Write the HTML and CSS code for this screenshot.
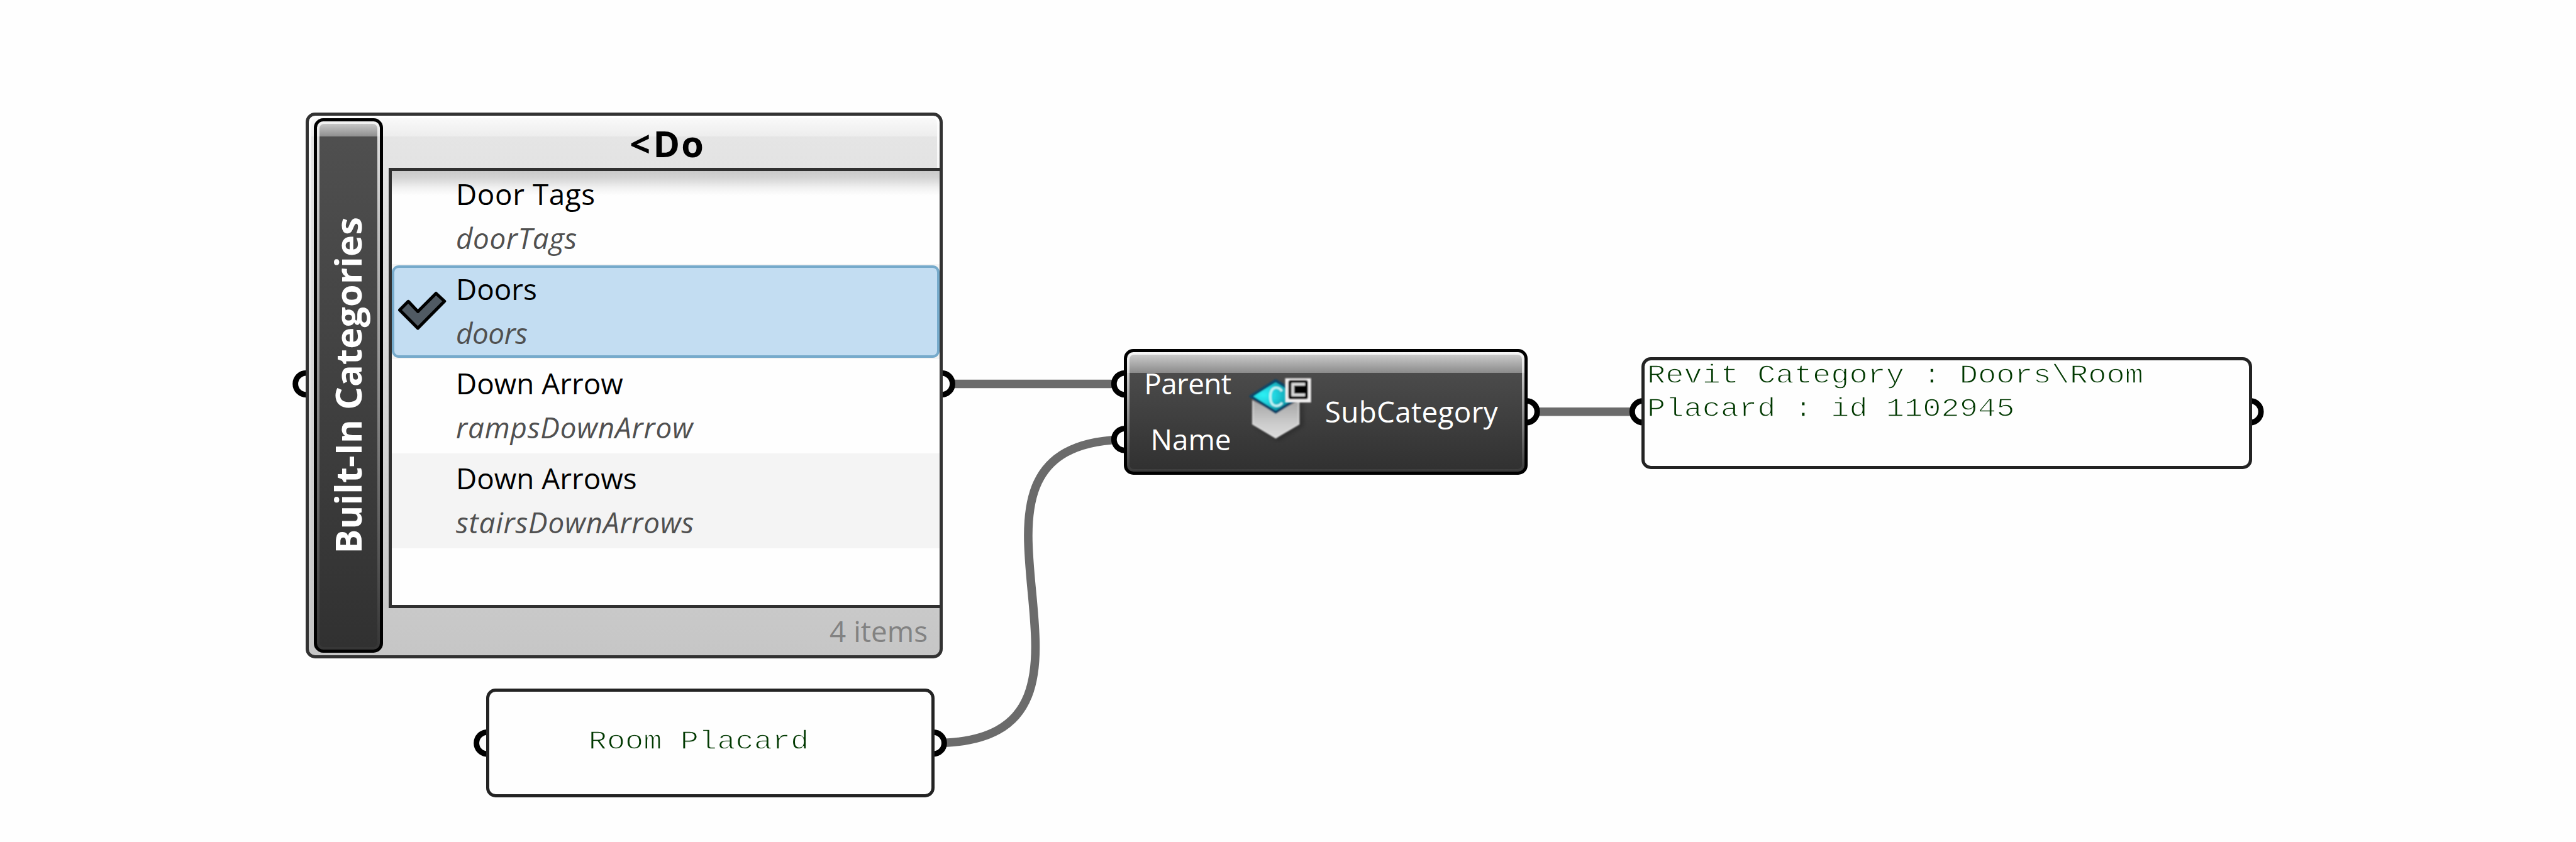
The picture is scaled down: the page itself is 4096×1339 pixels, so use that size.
FILE: index.html
```html
<!DOCTYPE html>
<html lang="en">
<head>
<meta charset="utf-8">
<title>SubCategory graph</title>
<link rel="stylesheet" href="styles.css">
</head>
<body>
<main class="canvas">
  <svg class="wires" viewBox="0 0 5551 1815" preserveAspectRatio="none" aria-hidden="true">
    <g class="wire">
      <path d="M2029 827.5H2424"/>
      <path d="M2014 1601.7C2496 1601.7 1951 947.3 2433 947.3"/>
      <path d="M3289 887.5H3541"/>
    </g>
    <g class="port">
      <circle cx="660" cy="827.5" r="23.5"/>
      <circle cx="2029" cy="827.5" r="23.5"/>
      <circle cx="1050.2" cy="1601.7" r="23.5"/>
      <circle cx="2011.2" cy="1601.7" r="23.5"/>
      <circle cx="2424" cy="827.5" r="23.5"/>
      <circle cx="2424" cy="947.3" r="23.5"/>
      <circle cx="3289" cy="887.5" r="23.5"/>
      <circle cx="3540.7" cy="887.5" r="23.5"/>
      <circle cx="4848.7" cy="887.5" r="23.5"/>
    </g>
  </svg>

  <section class="node picker">
    <div class="picker-bar"><span class="picker-name">Built-In Categories</span></div>
    <div class="picker-main">
      <header class="picker-filter"><span class="lt">&lt;</span>Do</header>
      <ul class="picker-list">
        <li class="item"><span class="title wide">Door Tags</span><em class="value">doorTags</em></li>
        <li class="item alt selected">
          <svg class="check" viewBox="0 0 76 60" aria-hidden="true"><path d="M3.5 30 17.2 16.3 32.4 32.4 61.3 3.5 74.8 16 32.4 58.9Z"/></svg>
          <span class="title">Doors</span><em class="value tight">doors</em>
        </li>
        <li class="item"><span class="title">Down Arrow</span><em class="value loose">rampsDownArrow</em></li>
        <li class="item alt"><span class="title">Down Arrows</span><em class="value loose">stairsDownArrows</em></li>
      </ul>
      <footer class="picker-count">4 items</footer>
    </div>
  </section>

  <section class="node panel panel-name"><p class="mono">Room Placard</p></section>

  <section class="node component">
    <div class="inputs"><span class="parent">Parent</span><span>Name</span></div>
    <svg class="icon" viewBox="80 100 420 420" aria-hidden="true">
      <defs>
        <linearGradient id="body" x1="0" y1="0" x2="0" y2="1">
          <stop offset="0" stop-color="#a4a4a4"/><stop offset=".6" stop-color="#cbcbcb"/><stop offset="1" stop-color="#dcdcdc"/>
        </linearGradient>
        <radialGradient id="top" cx=".25" cy=".45" r=".6">
          <stop offset="0" stop-color="#2df0f4"/><stop offset=".45" stop-color="#1fd0dc"/><stop offset="1" stop-color="#0b8f9f"/>
        </radialGradient>
        <filter id="soft" x="-20%" y="-20%" width="140%" height="140%"><feGaussianBlur stdDeviation="4"/></filter>
        <filter id="shade" x="-30%" y="-30%" width="160%" height="160%"><feGaussianBlur stdDeviation="14"/></filter>
      </defs>
      <path d="M135 270V425L280 512 445 415V260Z" fill="#000" opacity=".22" filter="url(#shade)"/>
      <g filter="url(#soft)">
        <path d="M112 245V405L265 496 419 405V245L265 330Z" fill="url(#body)"/>
        <path d="M119 255V401L265 487 412 401V255" fill="none" stroke="#dedede" stroke-width="9" opacity=".6"/>
        <path d="M104 223 265 121 426 223 265 326Z" fill="url(#top)" stroke="#0c4468" stroke-width="18" stroke-linejoin="round"/>
        <path d="M304 190C294 168 268 162 251 172 223 188 223 264 251 280 269 290 294 284 306 264" fill="none" stroke="#c4f3f5" stroke-width="15"/>
      </g>
      <g filter="url(#soft)">
        <path d="M326 106H493V263H326Z" fill="#f1efef"/>
        <rect x="347" y="118" width="126" height="123" rx="12" fill="#000"/>
        <path d="M455 145H375V214H455" fill="none" stroke="#dadada" stroke-width="18"/>
      </g>
    </svg>
    <span class="output">SubCategory</span>
  </section>

  <section class="node panel panel-result"><p class="mono">Revit Category : Doors\Room Placard : id 1102945</p></section>
</main>
</body>
</html>
```
FILE: styles.css
```css
* { box-sizing: border-box; }

body {
  margin: 0;
  background: #fefefe;
  font-family: "Open Sans", "Noto Sans", sans-serif;
  font-size: 45.8px;
}

.canvas {
  position: relative;
  width: 4096px;
  height: 1339px;
  overflow: hidden;
}

.wires {
  position: absolute;
  inset: 0;
  width: 100%;
  height: 100%;
}
.wire { fill: none; stroke: #6b6b6b; stroke-width: 18.4; }
.port { fill: #fefefe; stroke: #000; stroke-width: 12; }

.node { position: absolute; border-radius: 15px; }

/* Category picker */
.picker {
  left: 486px;
  top: 179px;
  width: 1013px;
  height: 868px;
  display: flex;
  border: 5px solid #323232;
  background: linear-gradient(#fff, #f4f4f4 12%, #c6c6c6);
}
.picker::before {
  content: "";
  position: absolute;
  inset: 4px 4px 0;
  border-radius: 8px 8px 10px 10px;
  background:
    linear-gradient(#f9f9f9, #ededed) 0 0 / 100% 29px no-repeat,
    linear-gradient(#e6e6e6, #c6c6c6);
}

.picker-bar {
  position: relative;
  flex: none;
  width: 110px;
  margin: 4px 9px 4px 8px;
  display: flex;
  align-items: center;
  justify-content: center;
  border: 5px solid #000;
  border-radius: 15px;
  background:
    linear-gradient(rgba(255,255,255,.55), rgba(255,255,255,.3)) 0 0 / 100% 24px no-repeat,
    linear-gradient(#e2e2e2, #363636);
}
.picker-bar::before {
  content: "";
  position: absolute;
  inset: 4px;
  border-radius: 7px;
  background:
    linear-gradient(#c6c6c6, #8f8f8f) 0 0 / 100% 20px no-repeat,
    linear-gradient(#505050, #313131);
}
.picker-name {
  position: relative;
  margin-right: 3px;
  writing-mode: vertical-rl;
  transform: rotate(180deg);
  color: #fff;
  font-size: 57.6px;
  font-weight: 700;
  line-height: 78px;
  letter-spacing: .17px;
  white-space: nowrap;
}

.picker-main {
  position: relative;
  flex: 1;
  display: flex;
  flex-direction: column;
}
.picker-filter {
  height: 83px;
  padding: 4px 0 0 10px;
  font-size: 57.6px;
  font-weight: 700;
  line-height: 80px;
  letter-spacing: 2px;
  text-align: center;
}
.lt { letter-spacing: 4.5px; }

.picker-list {
  flex: none;
  height: 700px;
  margin: 0;
  padding: 0;
  list-style: none;
  overflow: hidden;
  border: 5px solid #303030;
  border-right: 0;
  background:
    linear-gradient(#cacaca, #d4d4d4 28%, #f1f1f1 68%, #fefefe) 0 0 / 100% 39px no-repeat,
    #fefefe;
}
.item {
  position: relative;
  display: flex;
  flex-direction: column;
  height: 150.55px;
  padding: 3.4px 0 0 102px;
  line-height: 70.3px;
  white-space: nowrap;
}
.item:first-child { margin-top: -2.3px; }
.item.alt { background: #f4f4f4; }
.item.selected::before {
  content: "";
  position: absolute;
  inset: 2px 0;
  border: 4px solid #76aacb;
  border-radius: 11px;
  background: #c3ddf2;
}
.title, .value { position: relative; }
.title { color: #000; }
.title.wide { letter-spacing: .6px; }
.value { color: #505050; letter-spacing: .57px; }
.value.tight { letter-spacing: -.45px; }
.value.loose { letter-spacing: .83px; }
.check {
  position: absolute;
  left: 9px;
  top: 43px;
  width: 76px;
  height: 60px;
  overflow: visible;
  fill: #505a63;
  stroke: #000;
  stroke-width: 5;
  stroke-linejoin: round;
}

.picker-count {
  padding-right: 19px;
  line-height: 72px;
  color: #828282;
  text-align: right;
}

/* Text panels */
.panel {
  display: flex;
  border: 5px solid #232323;
  background: #fefefe;
}
.mono {
  margin: 0;
  font: 48.7px/62.1px "Liberation Mono", monospace;
  color: #003800;
  -webkit-text-stroke: 1.5px #fefefe;
  transform: scaleY(.86);
  transform-origin: 0 0;
}
.panel-name {
  left: 773px;
  top: 1095px;
  width: 713px;
  height: 173px;
  align-items: center;
  justify-content: center;
  padding: 0 37px 0 0;
}
.panel-name .mono { transform-origin: 0 50%; margin-top: -3px; }
.panel-result {
  left: 2610px;
  top: 568px;
  width: 971px;
  height: 178px;
  padding: 0 0 0 4px;
}
.panel-result .mono { margin-top: -2px; }

/* SubCategory component */
.component {
  left: 1787px;
  top: 555px;
  width: 642px;
  height: 200px;
  display: flex;
  align-items: center;
  border: 5px solid #000;
  background:
    linear-gradient(rgba(255,255,255,.6), rgba(255,255,255,.3)) 0 0 / 100% 33px no-repeat,
    linear-gradient(#e6e6e6, #3a3a3a);
  color: #fff;
}
.component::before {
  content: "";
  position: absolute;
  inset: 4px;
  border-radius: 7px;
  background:
    linear-gradient(#cacaca, #8b8b8b) 0 0 / 100% 29px no-repeat,
    linear-gradient(#505050, #313131);
}
.inputs {
  position: relative;
  display: flex;
  flex-direction: column;
  width: 165.5px;
  margin-top: -2.5px;
  line-height: 88.6px;
  text-align: right;
}
.parent { letter-spacing: -.6px; }
.icon {
  position: relative;
  flex: none;
  width: 103.3px;
  height: 103.3px;
  margin: -6px 21px 0 25px;
}
.output {
  position: relative;
  margin-top: -2.5px;
  letter-spacing: .32px;
}
```
